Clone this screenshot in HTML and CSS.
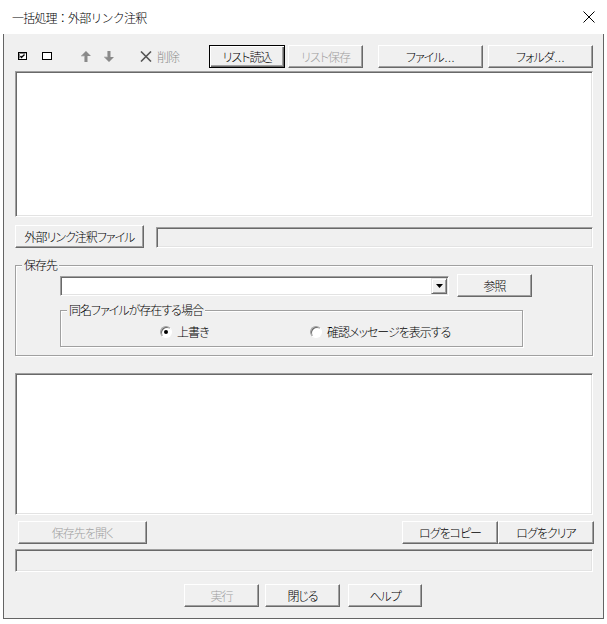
FILE: index.html
```html
<!DOCTYPE html>
<html lang="ja">
<head>
  <meta charset="UTF-8">
  <title>一括処理：外部リンク注釈</title>
  <link rel="stylesheet" href="styles.css">
</head>
<body>

  <!-- Title bar -->
  <div class="titlebar">
    <span class="title">一括処理：外部リンク注釈</span>
    <svg class="close" width="12" height="12" viewBox="0 0 12 12"><path d="M0.5 0.5 L11.5 11.5 M11.5 0.5 L0.5 11.5" stroke="#000" stroke-width="1" fill="none"/></svg>
  </div>

  <div class="dialog">

    <!-- Toolbar -->
    <div class="toolbar">
      <div class="tools">
        <svg class="ico chk-on" width="9" height="8" viewBox="0 0 9 8"><rect x="0.5" y="0.5" width="8" height="7" fill="#fff" stroke="#000"/><path d="M1.5 1.5 H7.5 M1.5 1.5 V6.5" stroke="#808080"/><path d="M2.5 4 L3.5 5.5 L6.5 2.5" stroke="#000" stroke-width="1.4" fill="none"/></svg>
        <svg class="ico chk-off" width="10" height="8" viewBox="0 0 10 8"><rect x="0.5" y="0.5" width="9" height="7" fill="#fff" stroke="#000"/></svg>
        <svg class="ico up" width="10" height="11" viewBox="0 0 10 11"><path d="M5 0 L10 5 L6.5 5 L6.5 11 L3.5 11 L3.5 5 L0 5 Z" fill="#8a8a8a"/><path d="M5 0 L0 5 L3.5 5 L3.5 11" stroke="#b4b4b4" fill="none" stroke-width="0.8"/></svg>
        <svg class="ico down" width="10" height="11" viewBox="0 0 10 11"><path d="M5 11 L10 6 L6.5 6 L6.5 0 L3.5 0 L3.5 6 L0 6 Z" fill="#8a8a8a"/><path d="M3.5 0 L3.5 6 L0 6" stroke="#b4b4b4" fill="none" stroke-width="0.8"/></svg>
        <svg class="ico del" width="12" height="11" viewBox="0 0 12 11"><path d="M1 0.5 L11 10.5 M11 0.5 L1 10.5" stroke="#555" stroke-width="1.6" fill="none"/></svg>
        <span class="del-text">削除</span>
      </div>
      <button class="btn default w76">リスト読込</button>
      <button class="btn w75 ml3" disabled>リスト保存</button>
      <button class="btn w105 ml15">ファイル<span class="dots">...</span></button>
      <button class="btn w105 ml5">フォルダ<span class="dots">...</span></button>
    </div>

    <div class="listbox file-list"></div>

    <div class="row annot-row">
      <button class="btn w129">外部リンク注釈ファイル</button>
      <div class="field readonly annot-path"></div>
    </div>

    <!-- Save destination -->
    <div class="group save-group">
      <span class="group-title">保存先</span>
      <div class="row dest-row">
        <div class="combo">
          <span class="combo-btn"><svg width="7" height="4" viewBox="0 0 7 4"><path d="M0 0 H7 L3.5 4 Z" fill="#000"/></svg></span>
        </div>
        <button class="btn w75 ml8">参照</button>
      </div>
      <div class="group same-group">
        <span class="group-title">同名ファイルが存在する場合</span>
        <div class="radios">
          <label class="radio r1"><span class="dot on"></span>上書き</label>
          <label class="radio r2"><span class="dot"></span>確認メッセージを表示する</label>
        </div>
      </div>
    </div>

    <div class="listbox log"></div>

    <div class="row log-row">
      <button class="btn w129 ml3" disabled>保存先を開く</button>
      <button class="btn w96 push">ログをコピー</button>
      <button class="btn w96">ログをクリア</button>
    </div>

    <div class="field readonly status"></div>

    <div class="row footer">
      <button class="btn w75" disabled>実行</button>
      <button class="btn w75 ml6">閉じる</button>
      <button class="btn w74 ml8">ヘルプ</button>
    </div>

  </div>

</body>
</html>
```

FILE: styles.css
```css
/* Global */
body { margin: 0; width: 607px; height: 624px; background: #fff; font-family: "Noto Sans CJK JP", "Noto Sans", sans-serif; font-size: 12px; font-weight: 300; color: #000; font-feature-settings: "palt" 1; letter-spacing: -1px; overflow: hidden; }
button { font-family: inherit; font-size: 12px; font-weight: 300; font-feature-settings: "palt" 1; letter-spacing: -1px; }

/* Title bar */
.titlebar { height: 34px; display: flex; align-items: center; padding: 0 12px; box-sizing: border-box; }
.title { font-size: 12px; font-weight: 300; font-feature-settings: normal; letter-spacing: -0.8px; }
.close { margin-left: auto; margin-right: 0; }

/* Dialog body */
.dialog { margin: 0 3px; height: 585px; box-sizing: border-box; border: 1px solid #646464; border-top: 0; background: #f0f0f0; padding: 11px 10px 0 11px; }
.row { display: flex; }

/* Toolbar */
.toolbar { display: flex; height: 23px; align-items: center; }
.tools { width: 195px; display: flex; align-items: center; }
.ico { display: block; flex: none; }
.chk-on { margin-left: 3px; margin-top: -2px; }
.chk-off { margin-left: 15px; margin-top: -2px; }
.up { margin-left: 29px; }
.down { margin-left: 13px; }
.del { margin-left: 26px; }
.del-text { margin-left: 5px; color: #8c8c8c; }

/* Buttons */
.btn { height: 23px; padding: 0; box-sizing: border-box; background: #f0f0f0; border: 1px solid; border-color: #fff #696969 #696969 #fff; box-shadow: inset -1px -1px 0 #a0a0a0; color: #000; flex: none; line-height: 18px; }
.btn.default { border-color: #000; box-shadow: inset 1px 1px 0 #fff, inset -1px -1px 0 #696969, inset -2px -2px 0 #a0a0a0; }
.btn:disabled { color: #a0a0a0; }
.dots { letter-spacing: 0.5px; margin-left: 1px; }
.w74 { width: 74px; }
.w75 { width: 75px; }
.w76 { width: 76px; }
.w96 { width: 96px; }
.w105 { width: 105px; }
.w129 { width: 129px; }
.ml3 { margin-left: 3px; }
.ml5 { margin-left: 5px; }
.ml6 { margin-left: 6px; }
.ml8 { margin-left: 8px; }
.ml15 { margin-left: 15px; }
.push { margin-left: auto; }

/* Sunken boxes */
.listbox, .field, .combo { box-sizing: border-box; border: 1px solid; border-color: #a0a0a0 #fff #fff #a0a0a0; box-shadow: inset 1px 1px 0 #696969, inset -1px -1px 0 #e3e3e3; background: #fff; }
.readonly { background: #f0f0f0; }
.file-list { margin-top: 3px; height: 146px; }
.annot-row { margin-top: 8px; height: 23px; align-items: flex-end; }
.annot-path { flex: 1; height: 21px; margin-left: 12px; }

/* Group boxes */
.group { position: relative; box-sizing: border-box; border: 1px solid #a0a0a0; box-shadow: 1px 1px 0 #fff, inset 1px 1px 0 #fff; }
.group-title { position: absolute; top: -9px; left: 6px; padding: 0 2px; background: #f0f0f0; line-height: 16px; }
.save-group { margin-top: 17px; height: 91px; padding: 8px 0 0 44px; }
.dest-row { height: 23px; align-items: center; }
.combo { width: 389px; height: 20px; position: relative; }
.combo-btn { position: absolute; right: 1px; top: 1px; width: 16px; height: 16px; box-sizing: border-box; background: #f0f0f0; border: 1px solid; border-color: #e3e3e3 #696969 #696969 #e3e3e3; box-shadow: inset 1px 1px 0 #fff, inset -1px -1px 0 #a0a0a0; display: flex; align-items: center; justify-content: center; }
.same-group { margin-top: 13px; width: 463px; height: 37px; }
.radios { display: flex; height: 35px; align-items: flex-end; padding-bottom: 6px; box-sizing: border-box; }
.radio { display: flex; align-items: center; line-height: 16px; }
.r1 { margin-left: 99px; width: 150px; }
.r2 { margin-left: 0; }
.dot { width: 12px; height: 12px; box-sizing: border-box; border-radius: 50%; margin-right: 5px; background: #fff; border: 1px solid; border-color: #a0a0a0 #fff #fff #a0a0a0; box-shadow: inset 1px 1px 0 #696969; position: relative; flex: none; }
.dot.on::after { content: ""; position: absolute; left: 3px; top: 3px; width: 4px; height: 4px; border-radius: 50%; background: #000; }

/* Log area */
.log { margin-top: 17px; height: 142px; }
.log-row { margin-top: 6px; height: 23px; margin-right: -1px; }
.status { margin-top: 5px; height: 23px; }
.footer { margin-top: 12px; height: 23px; padding-left: 169px; }
```
